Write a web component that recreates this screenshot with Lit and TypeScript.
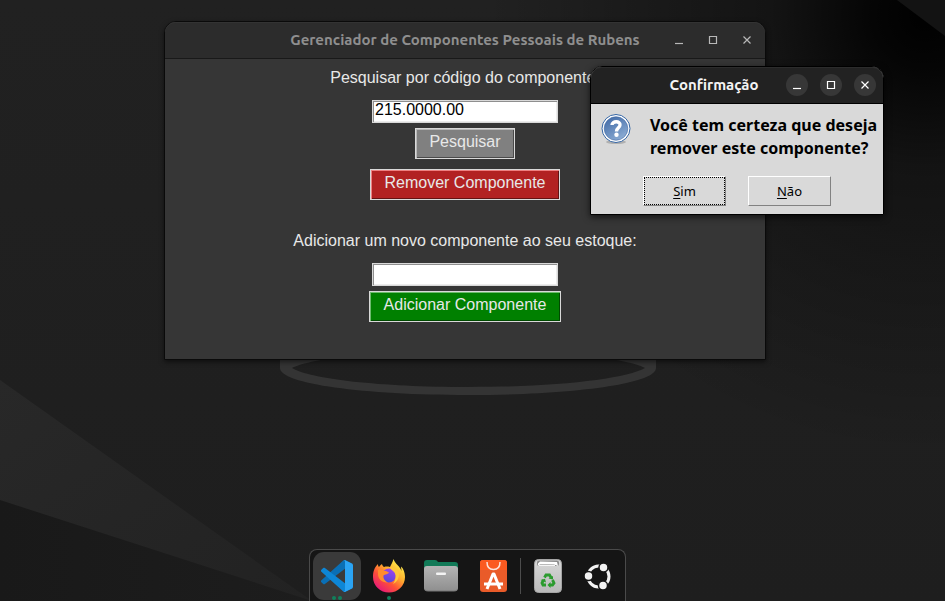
import { LitElement, html, css, svg } from "lit";
import { customElement, property } from "lit/decorators.js";

const minimizeGlyph = svg`<path d="M1 8.5h8" />`;
const maximizeGlyph = svg`<path d="M1.5 1.5h7v7h-7z" />`;
const closeGlyph = svg`<path d="M1.5 1.5l7 7M8.5 1.5l-7 7" />`;

/** Title bar shared by the main window and the dialog. */
@customElement("title-bar")
class TitleBar extends LitElement {
  @property() heading = "";
  @property({ type: Boolean, reflect: true }) active = false;

  static styles = css`
    :host {
      display: grid;
      grid-template-columns: 1fr auto;
      align-items: center;
      height: 37px;
      box-sizing: border-box;
      background: #2c2c2c;
      color: #8f8f8f;
      border-bottom: 1px solid #191919;
      border-radius: 11px 11px 0 0;
      box-shadow: inset 0 1px #333;
      font: 600 15px/20px Ubuntu, "Open Sans", "Noto Sans", sans-serif;
    }
    :host([active]) {
      background: #222;
      color: #f4f4f4;
      border-bottom-color: #000;
      box-shadow: inset 0 1px #2c2c2c;
    }
    .heading {
      grid-area: 1 / 1 / 2 / 3;
      margin: 0;
      font: inherit;
      text-align: center;
      white-space: nowrap;
    }
    :host([active]) .heading {
      padding-right: 46px;
    }
    .controls {
      grid-area: 1 / 2;
      display: flex;
      gap: 12px;
      padding-right: 7px;
    }
    button {
      width: 22px;
      height: 22px;
      padding: 0;
      border: 0;
      border-radius: 50%;
      background: none;
      color: #b8b8b8;
      display: grid;
      place-items: center;
    }
    :host([active]) button {
      background: #373737;
      color: #fff;
    }
    svg {
      width: 10px;
      height: 10px;
      fill: none;
      stroke: currentColor;
      stroke-width: 1.2;
    }
  `;

  render() {
    return html`
      <h1 class="heading">${this.heading}</h1>
      <div class="controls">
        <button aria-label="Minimizar"><svg viewBox="0 0 10 10">${minimizeGlyph}</svg></button>
        <button aria-label="Maximizar"><svg viewBox="0 0 10 10">${maximizeGlyph}</svg></button>
        <button aria-label="Fechar"><svg viewBox="0 0 10 10">${closeGlyph}</svg></button>
      </div>
    `;
  }
}

const codeIcon = svg`
  <g transform="translate(0 1) scale(0.32)">
    <path fill="#0a6fb5" d="M96.460 10.800L75.860 0.880C73.470 -0.270 70.620 0.210 68.750 2.080L1.300 63.580C-0.520 65.240 -0.510 68.090 1.300 69.750L6.810 74.750C8.300 76.100 10.530 76.200 12.130 74.990L93.360 13.370C96.090 11.300 100 13.250 100 16.670V16.430C100 14.030 98.620 11.840 96.460 10.800Z" />
    <path fill="#0d86d6" d="M96.460 89.200L75.860 99.120C73.470 100.270 70.620 99.790 68.750 97.920L1.300 36.420C-0.520 34.760 -0.510 31.910 1.300 30.250L6.810 25.250C8.300 23.900 10.530 23.800 12.130 25.010L93.360 86.630C96.090 88.700 100 86.750 100 83.330V83.570C100 85.970 98.620 88.160 96.460 89.200Z" />
    <path fill="#2ba4f4" d="M75.860 99.130C73.470 100.270 70.620 99.790 68.750 97.920C71.060 100.220 75 98.590 75 95.330V4.670C75 1.410 71.060 -0.220 68.750 2.080C70.620 0.210 73.470 -0.270 75.860 0.870L96.460 10.780C98.620 11.820 100 14.010 100 16.410V83.590C100 85.990 98.620 88.180 96.460 89.220Z" />
  </g>
`;

const firefoxIcon = svg`
  <defs>
    <linearGradient id="fx" x1="0.85" y1="0.1" x2="0.2" y2="0.95">
      <stop offset="0" stop-color="#fff04d" /><stop offset="0.35" stop-color="#ffb02e" />
      <stop offset="0.65" stop-color="#ff5136" /><stop offset="1" stop-color="#e5177c" />
    </linearGradient>
    <linearGradient id="globe" x1="0.7" y1="0" x2="0.3" y2="1">
      <stop offset="0" stop-color="#a044f0" /><stop offset="1" stop-color="#5348d8" />
    </linearGradient>
  </defs>
  <path d="M20.500 0C19.500 4 18 5.500 17 8C13 7 11 8 11 8C9.500 7 9 5.500 9 5C7 6 6 8 6 8C5 7 5 6 5 5C1 9 0 13 0 18A16 15.500 0 0 0 32 18C32 13 30 9 28 7.500L28.500 12C27 7 22 5 20.500 0z" fill="url(#fx)" />
  <circle cx="16" cy="16.500" r="7" fill="url(#globe)" />
  <path d="M5 11C8 9 10 12 13 12L16 13.500C15 15.500 12 15 10.500 16.500C10 20 12 22 15 23.500C9 24 5 20 5 15z" fill="#ff8c2e" />
  <path d="M17 8C24 8 28 14 25 20C24 22 22 24 20 25C23 21 24 15 20 12C18 11 17 9 17 8z" fill="#ffc83b" />
`;

const filesIcon = svg`
  <defs>
    <linearGradient id="folder" x1="0" y1="0" x2="0" y2="1">
      <stop offset="0" stop-color="#b5b5b5" /><stop offset="1" stop-color="#8f8f8f" />
    </linearGradient>
  </defs>
  <path d="M0 3Q0 0 3 0H11Q13 0 14 2H31Q34 2 34 5V20H0z" fill="#127a58" />
  <rect y="6" width="34" height="25" rx="3" fill="url(#folder)" />
  <path d="M1 30Q2 31 4 31H30Q32 31 33 30" fill="none" stroke="#777" />
  <rect x="12" y="12.500" width="10" height="2.500" rx="1" fill="#f4f4f4" />
`;

const storeIcon = svg`
  <rect width="27" height="32" rx="3" fill="#e95b29" />
  <path d="M3 0H24Q27 0 27 3V10H0V3Q0 0 3 0z" fill="#fb5a20" />
  <path d="M7 2Q7 9.500 13.500 9.500T20 2" fill="none" stroke="#fbe3da" stroke-width="1.500" />
  <path d="M7 29L13 14H14L20 29" fill="none" stroke="#fff" stroke-width="3" stroke-linejoin="round" />
  <path d="M4 24H23" stroke="#fff" stroke-width="3" />
`;

const trashIcon = svg`
  <defs>
    <linearGradient id="bin" x1="0" y1="0" x2="0" y2="1">
      <stop offset="0" stop-color="#d8d8d8" /><stop offset="1" stop-color="#b9b9b9" />
    </linearGradient>
  </defs>
  <rect x="0.500" y="0.500" width="27" height="33" rx="4" fill="url(#bin)" stroke="#a5a5a5" />
  <rect x="3" y="1.500" width="22" height="5.500" rx="2" fill="#8a8a8a" />
  <path d="M4 7V4.500L6 2.500L23 3L24 7L20 5.500L6 5z" fill="#fff" />
  <path d="M5 7V5.500L21 6V7z" fill="#f4f4f4" />
  <g fill="none" stroke="#2b9b2e" stroke-width="2.800">
    <path d="M10.500 18.500L12 16H15.500L17 18.500" />
    <path d="M18.500 21L20 24L18.500 26H15.500" />
    <path d="M12 26H9L8 24L9.500 21" />
  </g>
  <path d="M14.500 19.500L19 17V20.500zM16.500 23V29L13.500 26zM6.500 21L11 19.800L12 23.500z" fill="#2b9b2e" />
`;

const ubuntuIcon = svg`
  <circle cx="14.500" cy="13.500" r="10.500" fill="none" stroke="#f2f2f2" stroke-width="3" />
  <g fill="#f2f2f2" stroke="#151515" stroke-width="1.500">
    <circle cx="4.500" cy="13" r="4.500" />
    <circle cx="19.500" cy="4.500" r="4.500" />
    <circle cx="19" cy="22.500" r="4.500" />
  </g>
`;

interface DockItem {
  label: string;
  width: number;
  height: number;
  icon: unknown;
  dots: number;
  current?: boolean;
}

const apps: DockItem[] = [
  { label: "Visual Studio Code", width: 32, height: 34, icon: codeIcon, dots: 2, current: true },
  { label: "Firefox", width: 32, height: 34, icon: firefoxIcon, dots: 1 },
  { label: "Arquivos", width: 34, height: 32, icon: filesIcon, dots: 0 },
  { label: "Central de aplicativos", width: 27, height: 32, icon: storeIcon, dots: 0 },
];
const system: DockItem[] = [
  { label: "Lixeira", width: 28, height: 34, icon: trashIcon, dots: 0 },
  { label: "Mostrar aplicativos", width: 28, height: 27, icon: ubuntuIcon, dots: 0 },
];

@customElement("app-dock")
class AppDock extends LitElement {
  static styles = css`
    :host {
      display: flex;
      align-items: flex-start;
      padding: 2px 3px;
      height: 54px;
      box-sizing: border-box;
      border: 1px solid #4a4a4a;
      border-bottom: 0;
      border-radius: 8px 8px 0 0;
      background: #151515;
    }
    .group {
      display: flex;
      gap: 4px;
    }
    .group.system {
      gap: 2px;
    }
    .divider {
      width: 1px;
      height: 36px;
      margin: 6px 3px;
      background: #4c4c4c;
    }
    .item {
      position: relative;
      display: grid;
      place-items: center;
      width: 48px;
      height: 48px;
      padding: 0;
      border: 0;
      border-radius: 11px;
      background: none;
    }
    .item.current {
      background: #3a3a3a;
    }
    .dots {
      position: absolute;
      inset: auto 0 0;
      display: flex;
      justify-content: center;
      gap: 2px;
    }
    .dot {
      width: 4px;
      height: 4px;
      border-radius: 50%;
      background: #10805c;
    }
  `;

  private item(app: DockItem) {
    return html`
      <button class="item ${app.current ? "current" : ""}" aria-label=${app.label}>
        <svg width=${app.width} height=${app.height} viewBox="0 0 ${app.width} ${app.height}">${app.icon}</svg>
        <span class="dots">${Array.from({ length: app.dots }, () => html`<span class="dot"></span>`)}</span>
      </button>
    `;
  }

  render() {
    return html`
      <div class="group">${apps.map((app) => this.item(app))}</div>
      <div class="divider"></div>
      <div class="group system">${system.map((app) => this.item(app))}</div>
    `;
  }
}

@customElement("app-root")
class AppRoot extends LitElement {
  static styles = css`
    :host {
      position: relative;
      display: flex;
      flex-direction: column;
      justify-content: flex-end;
      align-items: center;
      min-height: 100vh;
      box-sizing: border-box;
      padding-right: 10px;
      overflow: hidden;
      background: #1f1f1f;
      font: 16px/18px "Liberation Sans", Arial, sans-serif;
    }
    .wallpaper {
      position: absolute;
      inset: 0;
      width: 100%;
      height: 100%;
    }
    .window {
      position: absolute;
      box-sizing: border-box;
      border: 1px solid #0a0a0a;
      border-radius: 12px 12px 0 0;
    }
    .main {
      left: 164px;
      top: 21px;
      width: 602px;
      background: #363636;
      color: #e8e8e8;
      box-shadow: 0 2px 5px #0008;
    }
    .dialog {
      left: 590px;
      top: 66px;
      width: 294px;
      background: #d9d9d9;
      color: #000;
      border-color: #000;
      box-shadow: 0 2px 7px #000a;
    }
    .form {
      display: flex;
      flex-direction: column;
      align-items: center;
      padding: 10px 0 37px;
    }
    .form label {
      margin-bottom: 13px;
    }
    .form input {
      width: 186px;
      height: 23px;
      box-sizing: border-box;
      margin: 0 0 5px;
      padding: 0 2px 3px;
      border: 1px solid #d9d9d9;
      border-radius: 0;
      background: #fff;
      box-shadow: inset 1px 1px #8f8f8f, inset -1px -1px #ececec;
      color: #000;
      font: inherit;
      outline: 0;
    }
    .action {
      height: 31px;
      padding: 0 14px 4px;
      border: 1px solid #d9d9d9;
      border-radius: 0;
      color: #e8e8e8;
      font: inherit;
    }
    .search {
      margin-bottom: 10px;
      padding: 0 13px 4px;
      background: #808080;
      box-shadow: inset 1px 1px #b8b8b8, inset -1px -1px #4a4a4a;
    }
    .remove {
      margin-bottom: 32px;
      background: #b22222;
      box-shadow: inset 1px 1px #ee8080, inset -1px -1px #651313;
    }
    .add {
      background: #008000;
      box-shadow: inset 1px 1px #6dbb6d, inset -1px -1px #004a00;
    }
    .question {
      display: flex;
      gap: 19px;
      padding: 10px 4px 0 10px;
    }
    .question svg {
      flex: none;
    }
    .question p {
      margin: 0;
      font: 700 16px/23px "Noto Sans", sans-serif;
      white-space: nowrap;
    }
    .choices {
      display: flex;
      justify-content: center;
      gap: 22px;
      padding: 16px 0 8px;
    }
    .choice {
      width: 83px;
      height: 30px;
      padding: 0;
      border: 1px solid;
      border-color: #fff #828282 #828282 #fff;
      border-radius: 0;
      background: #d9d9d9;
      color: #000;
      font: 13px/18px "Noto Sans", sans-serif;
    }
    .choice.default {
      outline: 1px dotted #000;
      outline-offset: -2px;
    }
    .choice u {
      text-underline-offset: 2px;
    }
    app-dock {
      position: relative;
      margin-bottom: -2px;
    }
  `;

  render() {
    return html`
      <svg class="wallpaper" viewBox="0 0 945 601" preserveAspectRatio="none" aria-hidden="true">
        <defs>
          <linearGradient id="base" x1="0" y1="0" x2="0" y2="1">
            <stop offset="0" stop-color="#212121" />
            <stop offset="1" stop-color="#1e1e1e" />
          </linearGradient>
          <radialGradient id="corner" gradientUnits="userSpaceOnUse" cx="925" cy="15" r="440">
            <stop offset="0" stop-color="#000" />
            <stop offset="0.12" stop-color="#000" stop-opacity="0.85" />
            <stop offset="0.35" stop-color="#000" stop-opacity="0.4" />
            <stop offset="1" stop-color="#000" stop-opacity="0" />
          </radialGradient>
          <linearGradient id="beam" x1="0" y1="0" x2="1" y2="1">
            <stop offset="0" stop-color="#282828" />
            <stop offset="1" stop-color="#222" />
          </linearGradient>
          <linearGradient id="floor" x1="0" y1="0" x2="1" y2="0">
            <stop offset="0" stop-color="#191919" />
            <stop offset="1" stop-color="#1d1d1d" />
          </linearGradient>
        </defs>
        <rect width="945" height="601" fill="url(#base)" />
        <rect width="945" height="601" fill="url(#corner)" />
        <path d="M897 0H945V36z" fill="#131313" />
        <path d="M0 380L312 601H0z" fill="url(#beam)" />
        <path d="M0 500L312 601H0z" fill="url(#floor)" />
        <path
          fill="#343434"
          fill-rule="evenodd"
          d="M280 340H656V368C656 384 572 395 468 395S280 384 280 368zM292 368C310 379 380 387 468 387S626 379 645 368C625 358 555 350 468 350S312 358 292 368z"
        />
      </svg>

      <section class="window main" aria-label="Gerenciador de Componentes">
        <title-bar heading="Gerenciador de Componentes Pessoais de Rubens"></title-bar>
        <div class="form">
          <label for="search-code">Pesquisar por código do componente:</label>
          <input id="search-code" type="text" value="215.0000.00" />
          <button class="action search">Pesquisar</button>
          <button class="action remove">Remover Componente</button>
          <label for="new-code">Adicionar um novo componente ao seu estoque:</label>
          <input id="new-code" type="text" />
          <button class="action add">Adicionar Componente</button>
        </div>
      </section>

      <section class="window dialog" role="dialog" aria-label="Confirmação">
        <title-bar active heading="Confirmação"></title-bar>
        <div class="question">
          <svg width="30" height="32" viewBox="0 0 30 32" aria-hidden="true">
            <defs>
              <linearGradient id="badge" x1="0" y1="0" x2="0.6" y2="1">
                <stop offset="0" stop-color="#3c66a4" />
                <stop offset="1" stop-color="#89aad2" />
              </linearGradient>
            </defs>
            <ellipse cx="15" cy="28" rx="10" ry="2" fill="#b0b0b0" />
            <circle cx="15" cy="14.500" r="14" fill="#fff" stroke="#3465a4" />
            <circle cx="15" cy="14.500" r="11.800" fill="url(#badge)" stroke="#3f68a3" stroke-width="0.600" />
            <path
              d="M11 11C11 7 19.500 6.500 19 11C18.800 14 15.500 13.500 15.500 17.500"
              fill="none"
              stroke="#fff"
              stroke-width="3.400"
            />
            <circle cx="15.500" cy="20.800" r="2.200" fill="#fff" />
          </svg>
          <p>Você tem certeza que deseja<br />remover este componente?</p>
        </div>
        <div class="choices">
          <button class="choice default"><u>S</u>im</button>
          <button class="choice"><u>N</u>ão</button>
        </div>
      </section>

      <app-dock></app-dock>
    `;
  }
}
